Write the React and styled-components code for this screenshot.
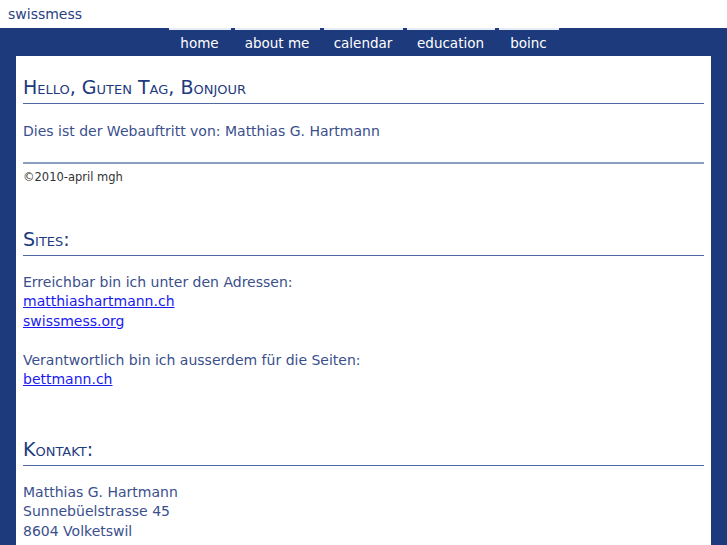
import styled, { createGlobalStyle } from 'styled-components';

const Global = createGlobalStyle`
  body { margin: 0; background: #1d3a7c; font-family: "DejaVu Sans", Verdana, sans-serif; }
`;

const Header = styled.div`
  background: #fff;
  height: 28px;
  padding-left: 8px;
  display: flex;
  align-items: center;
  font-size: 14px;
  color: #2a4280;
`;

const Nav = styled.nav`
  display: flex;
  justify-content: center;
  gap: 4px;
  height: 28px;
  margin-right: 0;
`;

const Tab = styled.a`
  width: ${p => p.w}px;
  border-top: 2px solid #e8ecf4;
  color: #fff;
  font-size: 13.5px;
  display: flex;
  justify-content: center;
  align-items: center;
`;

const Content = styled.main`
  background: #fff;
  margin: 0 16px;
  padding: 20px 7px 10px;
  min-height: 500px;
  color: #3a4f8c;
`;

const Heading = styled.h1`
  font-variant: small-caps;
  font-weight: normal;
  font-size: 19px;
  color: #1e3a7e;
  margin: ${p => p.top || 0}px 0 0;
  padding-bottom: 5px;
  border-bottom: 1px solid #4e6aa0;
`;

const Text = styled.p`
  font-size: 14px;
  line-height: 19.5px;
  margin: ${p => p.m || '17px 0 0'};
`;

const Rule = styled.hr`
  border: 0;
  border-top: 2px solid #8a9ec0;
  margin: 20px 0 6px;
`;

const Small = styled.div`
  font-size: 11.5px;
  color: #333;
`;

const Link = styled.a`
  color: #1a1aee;
  text-decoration: underline;
`;

export default function App() {
  return (
    <>
      <Global />
      <Header>swissmess</Header>
      <Nav>
        <Tab w={62}>home</Tab>
        <Tab w={85}>about me</Tab>
        <Tab w={79}>calendar</Tab>
        <Tab w={88}>education</Tab>
        <Tab w={60}>boinc</Tab>
      </Nav>
      <Content>
        <Heading>Hello, Guten Tag, Bonjour</Heading>
        <Text m="18px 0 0">Dies ist der Webauftritt von: Matthias G. Hartmann</Text>
        <Rule />
        <Small>©2010-april mgh</Small>
        <Heading top={44}>Sites:</Heading>
        <Text>
          Erreichbar bin ich unter den Adressen:<br />
          <Link href="#">matthiashartmann.ch</Link><br />
          <Link href="#">swissmess.org</Link>
        </Text>
        <Text m="19.5px 0 0">
          Verantwortlich bin ich ausserdem für die Seiten:<br />
          <Link href="#">bettmann.ch</Link>
        </Text>
        <Heading top={48}>Kontakt:</Heading>
        <Text>
          Matthias G. Hartmann<br />
          Sunnebüelstrasse 45<br />
          8604 Volketswil
        </Text>
      </Content>
    </>
  );
}
